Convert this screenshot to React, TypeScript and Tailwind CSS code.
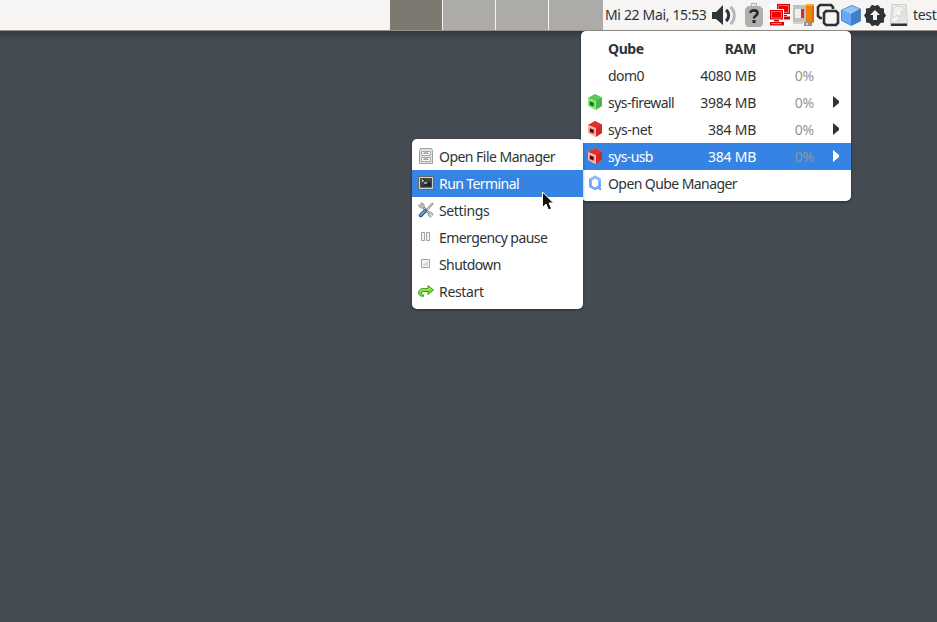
import type { ReactNode } from 'react';

function Cube({ kind }: { kind: 'green' | 'red' }) {
  const c = kind === 'green'
    ? { top: '#5dc658', left: '#85f47f', right: '#4fb34b', hole: '#28622b', rim: '#62cb5e' }
    : { top: '#dc322c', left: '#ffb5ae', right: '#d22722', hole: '#4d0806', rim: '#e5827b' };
  return (
    <svg className="h-4 w-4" viewBox="0 0 16 16">
      <path d="M1 4 8 0l7 3.500v8.500l-7 4-7-4z" fill={c.left} />
      <path d="M1 4 8 0l7 3.500-6 3.500z" fill={c.top} />
      <path d="M9 6.500 15 3.500V12l-6 4z" fill={c.right} />
      <path d="m2 6.500 5.500 2v5l-5.500-2z" fill={c.rim} />
      <path d="m3 7.500 3.500 1.300v3.500l-3.500-1.300z" fill={c.hole} />
    </svg>
  );
}

function QubesLogo() {
  return (
    <svg className="h-4 w-4" viewBox="0 0 16 16">
      <path d="M8 .5 14 4v8l-.7.6 1.5 1.6-1.800 1.200-2-1.600L8 15.200 2 12V4z" fill="#6da5fc" />
      <path d="M8 .5 14 4v4l-3-2.200L8 4 5 5.800 2 4z" fill="#8bb8ff" />
      <path d="m8 3.600 3.200 1.900v5L8 12.400l-3.200-1.900v-5z" fill="#fff" />
    </svg>
  );
}

function Arrow({ light }: { light?: boolean }) {
  return (
    <svg className="h-3 w-[6px]" viewBox="0 0 6 12">
      <path d="M0 0 6 5v2L0 12z" fill={light ? '#fff' : '#2e3436'} />
    </svg>
  );
}

function Qube({ name, ram, cpu, icon, arrow, active, header, tracking }: {
  name: string; ram?: string; cpu?: string; icon?: ReactNode; arrow?: boolean; active?: boolean; header?: boolean; tracking: string;
}) {
  return (
    <div className={`flex h-[27px] items-center pl-[6px] ${active ? 'bg-[#3584e4] text-white' : ''} ${header ? 'font-bold' : ''}`}>
      <span className="flex w-[21px] pb-[2px]">{icon}</span>
      <span className={`${tracking} ${ram ? 'w-[72px]' : 'w-[160px]'}`}>{name}</span>
      {ram && <span className="w-[76px] text-right tracking-[-0.25px]">{ram}</span>}
      {cpu && <span className={`w-[58px] text-right ${header ? 'tracking-[-0.7px]' : 'tracking-[-0.2px] text-[#929595]'}`}>{cpu}</span>}
      <span className="ml-[19px] pb-[2px]">{arrow && <Arrow light={active} />}</span>
    </div>
  );
}

function FileIcon() {
  return (
    <svg className="h-4 w-4" viewBox="0 0 16 16">
      <path d="M2.500.500h11l1 2v13h-13v-13z" fill="#e2e2df" stroke="#a1a19e" />
      <path d="M3.500 3.500h9v4h-9zM3.500 9.500h9v4h-9z" fill="#f8f8f5" stroke="#a9a9a5" />
      <path d="M6 6V5h4v1M6 12v-1h4v1" fill="none" stroke="#777" />
    </svg>
  );
}

function TerminalIcon() {
  return (
    <svg className="h-4 w-4" viewBox="0 0 16 16">
      <path d="M.500 1.500h15v13H.500z" fill="#d0cec9" stroke="#696966" />
      <path d="M2 3h12v9.500H2z" fill="#20282b" />
      <path d="M2.500 3.500h11v8.500h-11z" fill="none" stroke="#52605e" strokeWidth=".6" />
      <path d="m3.500 4.500 2 1.200-2 1.200M6 8h3" fill="none" stroke="#eef2ef" />
      <path d="M8 3.500h5v3L3 11V8.500z" fill="#fff" opacity=".12" />
    </svg>
  );
}

function ToolsIcon() {
  return (
    <svg className="h-4 w-4" viewBox="0 0 16 16">
      <path d="m3.500 3.500 9 9" stroke="#858884" strokeWidth="2.500" />
      <path d="m4 4 8 8" stroke="#d5d7d3" />
      <path d="M1 2.500v2L2.500 6h2L6 4.500v-2L4.500 1h-2l1.300 1.500v1H2.500z" fill="#c8cac5" stroke="#797b76" strokeWidth=".7" />
      <path d="M10.500 13.500 11 11l2.500-.5 1.700 1.800-.5.9-1.200-.8-1 1 .8 1.200-.9.6z" fill="#d8d9d5" stroke="#888a85" strokeWidth=".8" />
      <path d="m7 9 6.200-7.200L15 1l-.8 2L8 10" fill="#eee" stroke="#858782" />
      <path d="m2.700 13.300 4.300-4.300" stroke="#204a87" strokeWidth="3.800" strokeLinecap="round" />
      <path d="m2.800 13 4-4" stroke="#729fcf" strokeWidth="1.800" strokeLinecap="round" />
    </svg>
  );
}

function PauseIcon() {
  return (
    <svg className="h-4 w-4" viewBox="0 0 16 16">
      <path d="M3.500 3.500h3v8h-3zM8.500 3.500h3v8h-3z" fill="#f4f4f2" stroke="#a3a5a1" />
    </svg>
  );
}

function StopIcon() {
  return (
    <svg className="h-4 w-4" viewBox="0 0 16 16">
      <path d="M3.500 3.500h8v8h-8z" fill="#f4f4f2" stroke="#a3a5a1" />
      <path d="M5 8.500 10 5v5H5z" fill="#d6d8d5" />
    </svg>
  );
}

function RestartIcon() {
  return (
    <svg className="h-4 w-4" viewBox="0 0 16 16">
      <path d="M5.500 13.300C.8 13.500-.2 10 1.200 7.500 2.300 5.800 4 5.500 6 5.500h4V2.600L15.500 7 10 11.500V8.500H6c-2 0-2.500.7-2.300 2 .2 1.200 1 1.500 1.800 1.500z" fill="#76d435" stroke="#409817" />
      <path d="M2 8.500c.8-1.500 2-1.900 4-1.900h5V5l2.700 2" fill="none" stroke="#c8f6a0" strokeWidth=".6" />
    </svg>
  );
}

function Action({ icon, label, active, tracking }: { icon: ReactNode; label: string; active?: boolean; tracking: string }) {
  return (
    <div className={`flex h-[27px] items-center gap-[5px] pl-[6px] ${active ? 'bg-[#3584e4] text-white' : ''}`}>
      <span className="pb-[2px]">{icon}</span><span className={tracking}>{label}</span>
    </div>
  );
}

function Volume() {
  return (
    <svg className="h-6 w-6 shrink-0" viewBox="0 0 24 24">
      <path d="M0 9h4l7-7v20l-7-6H0z" fill="#2e3436" />
      <path d="M14 7c3.500 2.500 3.500 8 0 11" fill="none" stroke="#2e3436" strokeWidth="3" />
      <path d="M18.500 4c5 4 5 13 0 17" fill="none" stroke="#b5b6b5" strokeWidth="3" />
    </svg>
  );
}

function Clipboard() {
  return (
    <svg className="h-6 w-5 shrink-0" viewBox="0 0 20 24">
      <path d="M4 3h3V0h6v3h3l3 3v15l-2 3H3l-2-3V6z" fill="#aeb0af" />
      <path d="M8 1h4v2H8z" fill="#e8e8e7" />
      <path d="M6.500 10C6 6.500 13.500 6.500 13.500 10c0 3-3.500 2.500-3.500 5.500" fill="none" stroke="#22282b" strokeWidth="2.600" />
      <path d="M8.500 17h3v3h-3z" fill="#22282b" />
    </svg>
  );
}

function Network() {
  return (
    <svg className="h-[22px] w-[22px] shrink-0" viewBox="0 0 22 22">
      <path d="M0 0h22v22H0z" fill="#fff" />
      <path d="M8 0h13v10H8zM14 11h4v1h-4zM13 12.500h8v3h-8z" fill="#d80000" />
      <path d="M9.500 1.500h10v7h-10z" fill="#f00000" stroke="#ff8a8a" strokeWidth=".8" />
      <path d="M0 5h15v11H0z" fill="#fff" />
      <path d="M1 6h13v9.500H1zM5 16h5v1.500H5zM1 18h14v3.500H1z" fill="#d80000" />
      <path d="M2.500 7.500h10v6.500h-10z" fill="#f00000" stroke="#ff8a8a" strokeWidth=".8" />
      <path d="M2.500 19.700h10" stroke="#ff9a9a" />
    </svg>
  );
}

function Devices() {
  return (
    <svg className="h-[23px] w-[22px] shrink-0" viewBox="0 0 22 23">
      <path d="M13 0h7l1 1v17l-1 1h-7z" fill="#ee820f" />
      <path d="M13 0h7v2h-7z" fill="#f8a745" />
      <path d="M19 2h2v16h-2z" fill="#d96d05" />
      <path d="M11 18h8v4h-8z" fill="#92918e" />
      <path d="M13 19h2v2h-2z" fill="#d7d6d3" />
      <path d="M0 1h13v17H0z" fill="#c3bfba" />
      <path d="M2 5h9v9H2z" fill="#f0f0ee" />
      <path d="M8 5h3v9H8z" fill="#df2635" />
      <path d="M0 18h10v2H0z" fill="#d4d2cf" />
    </svg>
  );
}

function Copy() {
  return (
    <svg className="h-6 w-6 shrink-0" viewBox="0 0 24 24" fill="none" stroke="#2e3436" strokeWidth="2.600">
      <path d="M6 15H4l-2-2V4l2-2h11l2 2v2" />
      <path d="M10 8h10l2 2v10l-2 2H10l-2-2V10z" fill="#f6f5f4" />
    </svg>
  );
}

function BlueCube() {
  return (
    <svg className="h-[21px] w-5 shrink-0" viewBox="0 0 20 21">
      <path d="M.500 5 11 .500 19.500 4v12l-9 4.500L.500 15.500z" fill="#63a7f6" stroke="#3678c5" strokeWidth=".8" />
      <path d="M1 5 11 1l8 3-9 5z" fill="#92c2fb" />
      <path d="m10 9 9-5v12l-9 4z" fill="#447dc4" />
    </svg>
  );
}

function Updates() {
  return (
    <svg className="h-[23px] w-[22px] shrink-0" viewBox="0 0 22 23">
      <path d="M8 .800 11 2l3-1.200L16.500 4l3.500.5v4l2 3-2 3v4l-3.500.500-2.500 3.200L11 21l-3 1.200L5.500 19 2 18.500v-4l-2-3 2-3v-4L5.500 4z" fill="#2e3436" />
      <path d="M11 6 16 11h-3v5H9v-5H6z" fill="#f6f5f4" />
    </svg>
  );
}

function Disk() {
  return (
    <svg className="h-[22px] w-[18px] shrink-0" viewBox="0 0 18 22">
      <path d="M2 .500h14l1.500 18v3H.500v-3z" fill="#e8e8e6" stroke="#cfcfcc" />
      <path d="M1 19.500h16V22H1z" fill="#302f38" />
      <ellipse cx="9" cy="9.500" rx="6.500" ry="7.500" fill="#f1f1ef" stroke="#d3d3d0" />
      <path d="M4 13 14 5l.5 7-4.500 4z" fill="#d4d5d2" opacity=".6" />
      <circle cx="9" cy="9.500" r="1.500" fill="#fff" />
      <path d="M3.500 16.500 7 13.500" stroke="#fff" strokeWidth="2" />
    </svg>
  );
}

function Panel() {
  return (
    <header className="flex h-[31px] border-b border-[#96928c] bg-[#f6f5f4] pl-[390px]">
      <div className="flex w-[213px] shrink-0 gap-px">
        <div className="w-[52px] bg-[#7d7970]" />
        <div className="w-[52px] bg-[#acaba8]" />
        <div className="w-[52px] bg-[#acaba8]" />
        <div className="w-[54px] bg-[#acaba8]" />
      </div>
      <div className="flex min-w-0 flex-1 items-center overflow-hidden whitespace-nowrap pl-[2px]">
        <span className="w-[107px] shrink-0 tracking-[-0.34px]">Mi 22 Mai, 15:53</span>
        <Volume />
        <span className="ml-[8px] flex"><Clipboard /></span>
        <span className="ml-[5px] flex"><Network /></span>
        <span className="ml-[2px] flex"><Devices /></span>
        <span className="ml-px flex"><Copy /></span>
        <span className="ml-px flex"><BlueCube /></span>
        <span className="ml-[3px] flex"><Updates /></span>
        <span className="ml-[4px] flex"><Disk /></span>
        <span className="ml-[5px] tracking-[-0.3px]">test</span>
      </div>
    </header>
  );
}

export default function App() {
  return (
    <main className="relative h-[622px] w-[937px] overflow-hidden bg-[#444b53] font-['Noto_Sans',sans-serif] text-[14px] leading-[18px] text-[#2e3436]">
      <Panel />
      <div className="h-2 bg-gradient-to-b from-[#343840] to-[#444b53]" />
      <section className="absolute left-[581px] top-[31px] w-[270px] overflow-hidden whitespace-nowrap rounded-[5px] bg-white py-1 shadow-[0_1px_3px_#0006]">
        <Qube name="Qube" ram="RAM" cpu="CPU" header tracking="tracking-[-0.4px]" />
        <Qube name="dom0" ram="4080 MB" cpu="0%" tracking="tracking-[-0.55px]" />
        <Qube name="sys-firewall" ram="3984 MB" cpu="0%" icon={<Cube kind="green" />} arrow tracking="tracking-[-0.55px]" />
        <Qube name="sys-net" ram="384 MB" cpu="0%" icon={<Cube kind="red" />} arrow tracking="tracking-[-0.4px]" />
        <Qube name="sys-usb" ram="384 MB" cpu="0%" icon={<Cube kind="red" />} arrow active tracking="tracking-[-0.6px]" />
        <Qube name="Open Qube Manager" icon={<QubesLogo />} tracking="tracking-[-0.58px]" />
      </section>
      <section className="absolute left-[412px] top-[139px] w-[171px] overflow-hidden whitespace-nowrap rounded-[5px] bg-white py-1 shadow-[0_1px_3px_#0006]">
        <Action label="Open File Manager" icon={<FileIcon />} tracking="tracking-[-0.53px]" />
        <Action label="Run Terminal" icon={<TerminalIcon />} active tracking="tracking-[-0.58px]" />
        <Action label="Settings" icon={<ToolsIcon />} tracking="tracking-[-0.37px]" />
        <Action label="Emergency pause" icon={<PauseIcon />} tracking="tracking-[-0.57px]" />
        <Action label="Shutdown" icon={<StopIcon />} tracking="tracking-[-0.6px]" />
        <Action label="Restart" icon={<RestartIcon />} tracking="tracking-[-0.32px]" />
      </section>
      <svg className="absolute left-[542px] top-[191px] h-5 w-3" viewBox="0 0 12 20">
        <path d="M.500 1v15.500L4 13l2.500 6 3-1.500L7 12h4.500z" fill="#111" stroke="#fff" />
      </svg>
    </main>
  );
}
